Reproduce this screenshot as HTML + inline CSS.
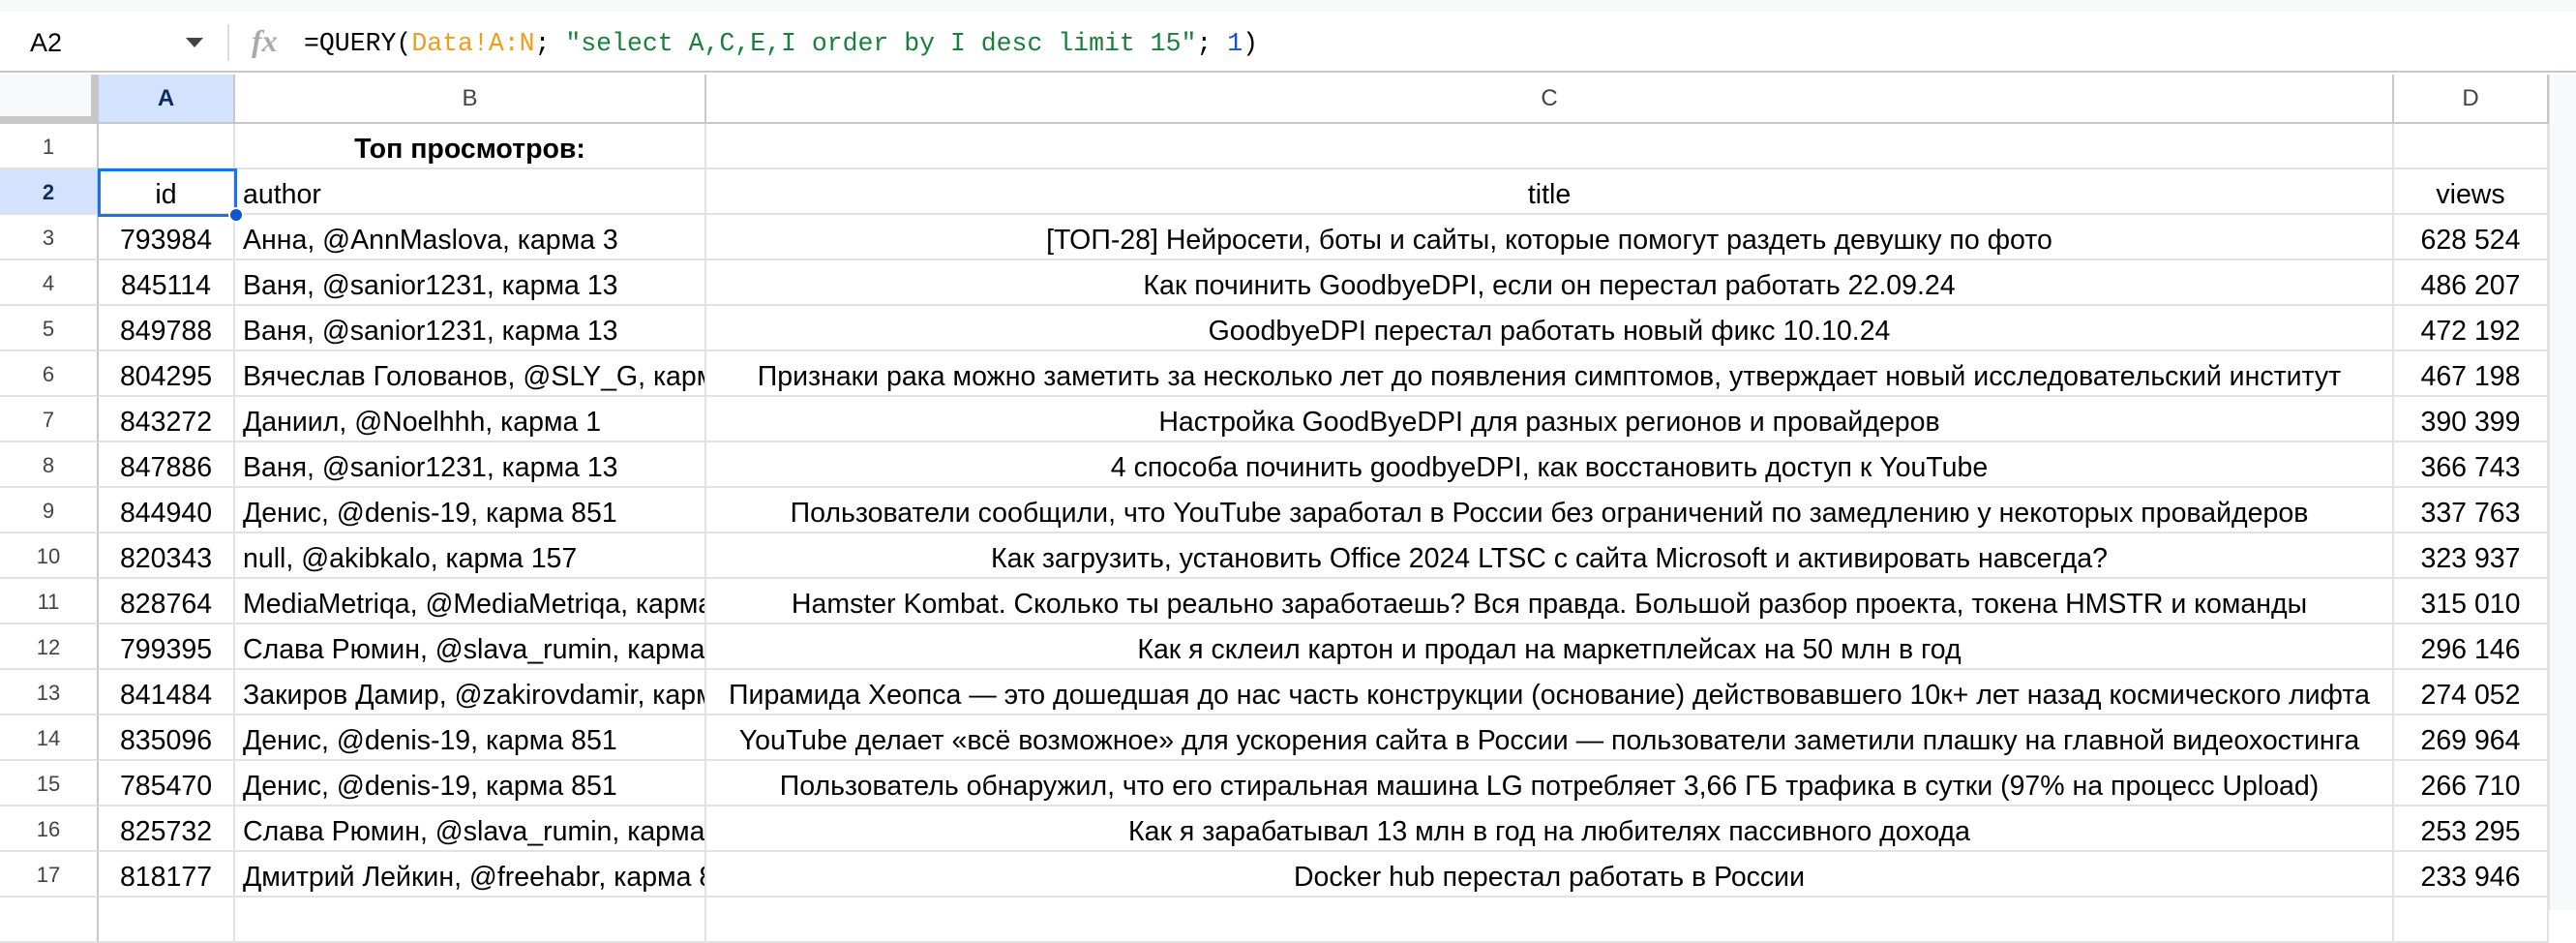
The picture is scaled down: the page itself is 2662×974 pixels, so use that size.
<!DOCTYPE html>
<html><head><meta charset="utf-8"><style>
*{margin:0;padding:0;box-sizing:border-box}
body{width:2662px;height:940px;overflow:hidden;background:#fff;font-family:"Liberation Sans",Arial,sans-serif;position:relative;color:#000}
.top{position:absolute;left:0;top:0;width:2662px;height:12px;background:#f8f9fa}
.fbar{position:absolute;left:0;top:12px;width:2662px;height:63px;background:#fff;border-bottom:2px solid #c7c7c7}
.a2{position:absolute;left:31px;top:12px;font-size:27px;line-height:40px;color:#000}
.tri{position:absolute;left:192px;top:27px;width:0;height:0;border-left:9px solid transparent;border-right:9px solid transparent;border-top:10px solid #444}
.div{position:absolute;left:235px;top:13px;width:2px;height:38px;background:#ddd}
.fx{position:absolute;left:260px;top:10px;font-family:"Liberation Serif",serif;font-style:italic;font-size:32px;color:#aaa;line-height:40px;font-weight:bold}
.formula{position:absolute;left:314px;top:13px;font-family:"Liberation Mono",monospace;font-size:26.5px;line-height:40px;white-space:pre;color:#000}
.o{color:#f29b1d}.g{color:#188038}.b{color:#1155cc}
.c{position:absolute;white-space:nowrap;overflow:hidden;font-size:28.5px;line-height:47px;padding-top:3px;border-right:2px solid #e2e2e2;border-bottom:2px solid #e2e2e2}
.h{position:absolute;top:77px;height:51px;line-height:49px;font-size:24px;text-align:center;color:#444;border-right:2px solid #c7c7c7;border-bottom:2px solid #c7c7c7;background:#fff}
.rn{position:absolute;left:0;width:102px;height:47px;line-height:47px;font-size:22px;text-align:center;color:#444;border-right:2px solid #c7c7c7;border-bottom:2px solid #e2e2e2;background:#fff}
.ctr{text-align:center}.lft{padding-left:8px}
</style></head><body>
<div class="top"></div>
<div class="fbar">
<div class="a2">A2</div><div class="tri"></div><div class="div"></div>
<div class="fx">fx</div>
<div class="formula">=QUERY(<span class="o">Data!A:N</span>; <span class="g">"select A,C,E,I order by I desc limit 15"</span>; <span class="b">1</span>)</div>
</div>
<div class="h" style="left:0;width:102px;background:#f8f9fa;border-right:8px solid #c7c7c7;border-bottom:8px solid #c7c7c7;height:51px"></div>
<div class="h" style="left:102px;width:141px;background:#d3e3fd;color:#0b2b66;font-weight:bold">A</div>
<div class="h" style="left:243px;width:487px">B</div>
<div class="h" style="left:730px;width:1744px">C</div>
<div class="h" style="left:2474px;width:160px">D</div>
<div style="position:absolute;left:2634px;top:77px;width:28px;height:863px;background:#f8f9fa;border-left:1px solid #e2e2e2"></div>

<div class="rn" style="top:128px">1</div>
<div class="c" style="left:102px;top:128px;width:141px;height:47px"></div>
<div class="c ctr" style="left:243px;top:128px;width:487px;height:47px;font-weight:bold">Топ просмотров:</div>
<div class="c" style="left:730px;top:128px;width:1744px;height:47px"></div>
<div class="c" style="left:2474px;top:128px;width:160px;height:47px"></div>

<div class="rn" style="top:175px;background:#d3e3fd;color:#0b2b66;font-weight:bold">2</div>
<div class="c ctr" style="left:102px;top:175px;width:141px;height:47px">id</div>
<div class="c lft" style="left:243px;top:175px;width:487px;height:47px">author</div>
<div class="c ctr" style="left:730px;top:175px;width:1744px;height:47px">title</div>
<div class="c ctr" style="left:2474px;top:175px;width:160px;height:47px">views</div>

<div class="rn" style="top:222px">3</div><div class="c ctr" style="left:102px;top:222px;width:141px;height:47px">793984</div><div class="c lft" style="left:243px;top:222px;width:487px;height:47px">Анна, @AnnMaslova, карма 3</div><div class="c ctr" style="left:730px;top:222px;width:1744px;height:47px">[ТОП-28] Нейросети, боты и сайты, которые помогут раздеть девушку по фото</div><div class="c ctr" style="left:2474px;top:222px;width:160px;height:47px">628 524</div>
<div class="rn" style="top:269px">4</div><div class="c ctr" style="left:102px;top:269px;width:141px;height:47px">845114</div><div class="c lft" style="left:243px;top:269px;width:487px;height:47px">Ваня, @sanior1231, карма 13</div><div class="c ctr" style="left:730px;top:269px;width:1744px;height:47px">Как починить GoodbyeDPI, если он перестал работать 22.09.24</div><div class="c ctr" style="left:2474px;top:269px;width:160px;height:47px">486 207</div>
<div class="rn" style="top:316px">5</div><div class="c ctr" style="left:102px;top:316px;width:141px;height:47px">849788</div><div class="c lft" style="left:243px;top:316px;width:487px;height:47px">Ваня, @sanior1231, карма 13</div><div class="c ctr" style="left:730px;top:316px;width:1744px;height:47px">GoodbyeDPI перестал работать новый фикс 10.10.24</div><div class="c ctr" style="left:2474px;top:316px;width:160px;height:47px">472 192</div>
<div class="rn" style="top:363px">6</div><div class="c ctr" style="left:102px;top:363px;width:141px;height:47px">804295</div><div class="c lft" style="left:243px;top:363px;width:487px;height:47px">Вячеслав Голованов, @SLY_G, карма</div><div class="c ctr" style="left:730px;top:363px;width:1744px;height:47px">Признаки рака можно заметить за несколько лет до появления симптомов, утверждает новый исследовательский институт</div><div class="c ctr" style="left:2474px;top:363px;width:160px;height:47px">467 198</div>
<div class="rn" style="top:410px">7</div><div class="c ctr" style="left:102px;top:410px;width:141px;height:47px">843272</div><div class="c lft" style="left:243px;top:410px;width:487px;height:47px">Даниил, @Noelhhh, карма 1</div><div class="c ctr" style="left:730px;top:410px;width:1744px;height:47px">Настройка GoodByeDPI для разных регионов и провайдеров</div><div class="c ctr" style="left:2474px;top:410px;width:160px;height:47px">390 399</div>
<div class="rn" style="top:457px">8</div><div class="c ctr" style="left:102px;top:457px;width:141px;height:47px">847886</div><div class="c lft" style="left:243px;top:457px;width:487px;height:47px">Ваня, @sanior1231, карма 13</div><div class="c ctr" style="left:730px;top:457px;width:1744px;height:47px">4 способа починить goodbyeDPI, как восстановить доступ к YouTube</div><div class="c ctr" style="left:2474px;top:457px;width:160px;height:47px">366 743</div>
<div class="rn" style="top:504px">9</div><div class="c ctr" style="left:102px;top:504px;width:141px;height:47px">844940</div><div class="c lft" style="left:243px;top:504px;width:487px;height:47px">Денис, @denis-19, карма 851</div><div class="c ctr" style="left:730px;top:504px;width:1744px;height:47px">Пользователи сообщили, что YouTube заработал в России без ограничений по замедлению у некоторых провайдеров</div><div class="c ctr" style="left:2474px;top:504px;width:160px;height:47px">337 763</div>
<div class="rn" style="top:551px">10</div><div class="c ctr" style="left:102px;top:551px;width:141px;height:47px">820343</div><div class="c lft" style="left:243px;top:551px;width:487px;height:47px">null, @akibkalo, карма 157</div><div class="c ctr" style="left:730px;top:551px;width:1744px;height:47px">Как загрузить, установить Office 2024 LTSC с сайта Microsoft и активировать навсегда?</div><div class="c ctr" style="left:2474px;top:551px;width:160px;height:47px">323 937</div>
<div class="rn" style="top:598px">11</div><div class="c ctr" style="left:102px;top:598px;width:141px;height:47px">828764</div><div class="c lft" style="left:243px;top:598px;width:487px;height:47px">MediaMetriqa, @MediaMetriqa, карма</div><div class="c ctr" style="left:730px;top:598px;width:1744px;height:47px">Hamster Kombat. Сколько ты реально заработаешь? Вся правда. Большой разбор проекта, токена HMSTR и команды</div><div class="c ctr" style="left:2474px;top:598px;width:160px;height:47px">315 010</div>
<div class="rn" style="top:645px">12</div><div class="c ctr" style="left:102px;top:645px;width:141px;height:47px">799395</div><div class="c lft" style="left:243px;top:645px;width:487px;height:47px">Слава Рюмин, @slava_rumin, карма</div><div class="c ctr" style="left:730px;top:645px;width:1744px;height:47px">Как я склеил картон и продал на маркетплейсах на 50 млн в год</div><div class="c ctr" style="left:2474px;top:645px;width:160px;height:47px">296 146</div>
<div class="rn" style="top:692px">13</div><div class="c ctr" style="left:102px;top:692px;width:141px;height:47px">841484</div><div class="c lft" style="left:243px;top:692px;width:487px;height:47px">Закиров Дамир, @zakirovdamir, карма</div><div class="c ctr" style="left:730px;top:692px;width:1744px;height:47px">Пирамида Хеопса — это дошедшая до нас часть конструкции (основание) действовавшего 10к+ лет назад космического лифта</div><div class="c ctr" style="left:2474px;top:692px;width:160px;height:47px">274 052</div>
<div class="rn" style="top:739px">14</div><div class="c ctr" style="left:102px;top:739px;width:141px;height:47px">835096</div><div class="c lft" style="left:243px;top:739px;width:487px;height:47px">Денис, @denis-19, карма 851</div><div class="c ctr" style="left:730px;top:739px;width:1744px;height:47px">YouTube делает «всё возможное» для ускорения сайта в России — пользователи заметили плашку на главной видеохостинга</div><div class="c ctr" style="left:2474px;top:739px;width:160px;height:47px">269 964</div>
<div class="rn" style="top:786px">15</div><div class="c ctr" style="left:102px;top:786px;width:141px;height:47px">785470</div><div class="c lft" style="left:243px;top:786px;width:487px;height:47px">Денис, @denis-19, карма 851</div><div class="c ctr" style="left:730px;top:786px;width:1744px;height:47px">Пользователь обнаружил, что его стиральная машина LG потребляет 3,66 ГБ трафика в сутки (97% на процесс Upload)</div><div class="c ctr" style="left:2474px;top:786px;width:160px;height:47px">266 710</div>
<div class="rn" style="top:833px">16</div><div class="c ctr" style="left:102px;top:833px;width:141px;height:47px">825732</div><div class="c lft" style="left:243px;top:833px;width:487px;height:47px">Слава Рюмин, @slava_rumin, карма</div><div class="c ctr" style="left:730px;top:833px;width:1744px;height:47px">Как я зарабатывал 13 млн в год на любителях пассивного дохода</div><div class="c ctr" style="left:2474px;top:833px;width:160px;height:47px">253 295</div>
<div class="rn" style="top:880px">17</div><div class="c ctr" style="left:102px;top:880px;width:141px;height:47px">818177</div><div class="c lft" style="left:243px;top:880px;width:487px;height:47px">Дмитрий Лейкин, @freehabr, карма 8</div><div class="c ctr" style="left:730px;top:880px;width:1744px;height:47px">Docker hub перестал работать в России</div><div class="c ctr" style="left:2474px;top:880px;width:160px;height:47px">233 946</div>
<div class="rn" style="top:927px"></div><div class="c" style="left:102px;top:927px;width:141px;height:47px"></div><div class="c" style="left:243px;top:927px;width:487px;height:47px"></div><div class="c" style="left:730px;top:927px;width:1744px;height:47px"></div><div class="c" style="left:2474px;top:927px;width:160px;height:47px"></div>

<div style="position:absolute;left:101px;top:174px;width:144px;height:50px;border:3px solid #1a73e8"></div>
<div style="position:absolute;left:236px;top:214px;width:16px;height:16px;border-radius:50%;background:#0b57d0;border:2px solid #fff"></div>
</body></html>
